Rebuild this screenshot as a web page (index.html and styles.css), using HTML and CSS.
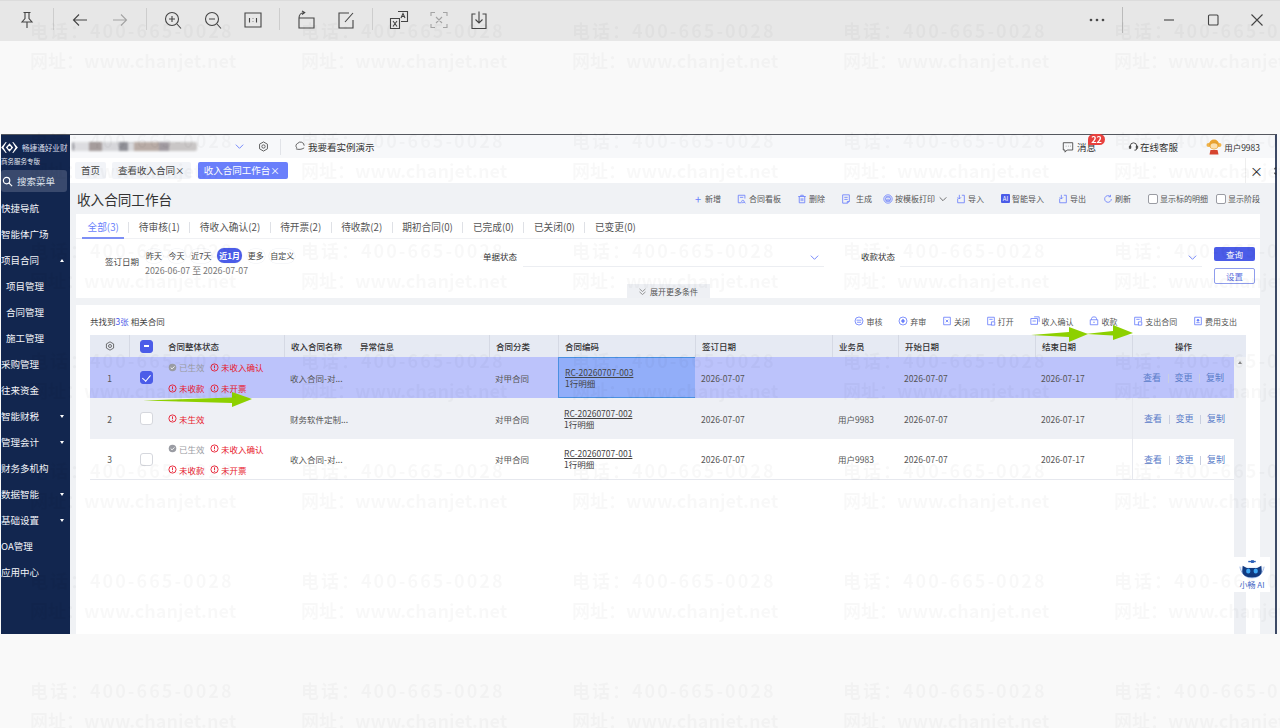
FILE: index.html
```html
<!DOCTYPE html>
<html lang="zh-CN">
<head>
<meta charset="utf-8">
<title>收入合同工作台</title>
<link rel="stylesheet" href="styles.css">
</head>
<body>
<svg class="defs" width="0" height="0">
  <symbol id="i-doc" viewBox="0 0 12 12"><path d="M2.500 1.500h7v9h-7z M4.500 4.500h3 M4.500 6.500h3 M4.500 8.500h2" fill="none" stroke="currentColor"/></symbol>
  <symbol id="i-board" viewBox="0 0 12 12"><path d="M9.500 5.500v-4h-8v9h4M7 7.500a1.500 1.500 0 1 0 .1 0M8.200 9.500l2 1.500M3.500 4h4" fill="none" stroke="currentColor"/></symbol>
  <symbol id="i-trash" viewBox="0 0 12 12"><path d="M1.500 3h9M4.500 3V1.500h3V3M2.700 3v7.500h6.600V3M5 5v3.500M7 5v3.500" fill="none" stroke="currentColor"/></symbol>
  <symbol id="i-gen" viewBox="0 0 12 12"><path d="M2 1h8v8l-2.500 2H2zM4 4h4M4 6.500h4M7.500 11V9H10" fill="none" stroke="currentColor"/></symbol>
  <symbol id="i-print" viewBox="0 0 12 12"><circle cx="6" cy="6" r="5" fill="none" stroke="currentColor"/><path d="M4 4.500V3h4v1.500M3 4.500h6v3H3zM4 7h4v2H4z" fill="none" stroke="currentColor" stroke-width=".8"/></symbol>
  <symbol id="i-io" viewBox="0 0 12 12"><path d="M7 1.500h3v9H2v-5M4 1v5M2 4l2 2 2-2" fill="none" stroke="currentColor"/></symbol>
  <symbol id="i-refresh" viewBox="0 0 12 12"><path d="M10 6a4 4 0 1 1-1.300-3M9 1v2.300H6.700" fill="none" stroke="currentColor"/></symbol>
  <symbol id="i-audit" viewBox="0 0 12 12"><circle cx="6" cy="6" r="4.800" fill="none" stroke="currentColor"/><path d="M3 5h6M3.500 7.500h5" stroke="currentColor"/></symbol>
  <symbol id="i-abandon" viewBox="0 0 12 12"><circle cx="6" cy="6" r="4.800" fill="none" stroke="currentColor"/><path d="M6 3.200L8.500 6 6 8.800 3.500 6z" fill="currentColor"/></symbol>
  <symbol id="i-docx" viewBox="0 0 12 12"><path d="M2 1.500h8v9H2zM4.500 4.500l3 3M7.500 4.500l-3 3" fill="none" stroke="currentColor"/></symbol>
  <symbol id="i-open" viewBox="0 0 12 12"><path d="M2 1.500h8v5M2 1.500v9h5M4 4h4M6.500 7h4v4h-4z" fill="none" stroke="currentColor"/></symbol>
  <symbol id="i-confirm" viewBox="0 0 12 12"><path d="M1 3h8v7H1zM5 1h6v6M3 6h4" fill="none" stroke="currentColor"/></symbol>
  <symbol id="i-box" viewBox="0 0 12 12"><path d="M1.500 4.500h9v6h-9zM3 4.500V3a3 2 0 0 1 6 0v1.500M5 7.500h2" fill="none" stroke="currentColor"/></symbol>
  <symbol id="i-card" viewBox="0 0 12 12"><path d="M2 1.500h8v9H2z" fill="none" stroke="currentColor"/><circle cx="6" cy="5" r="1.500" fill="currentColor"/><path d="M4 8h4" stroke="currentColor"/></symbol>
  <symbol id="i-warn" viewBox="0 0 10 10"><circle cx="5" cy="5" r="4" fill="none" stroke="currentColor"/><path d="M5 2.600v3.200M5 6.800v.9" stroke="currentColor"/></symbol>
  <symbol id="i-ok" viewBox="0 0 10 10"><circle cx="5" cy="5" r="4.200" fill="#9a9ca3"/><path d="M3 5l1.500 1.500L7.200 3.800" fill="none" stroke="#fff"/></symbol>
  <symbol id="i-gear" viewBox="0 0 12 12"><path d="M6 1l4.300 2.500v5L6 11 1.700 8.500v-5z" fill="none" stroke="currentColor"/><circle cx="6" cy="6" r="1.800" fill="none" stroke="currentColor"/></symbol>
  <symbol id="i-chev" viewBox="0 0 12 12"><path d="M2 4l4 4 4-4" fill="none" stroke="currentColor"/></symbol>
  <symbol id="i-chev2" viewBox="0 0 12 12"><path d="M2 2.500l4 3.500 4-3.500M2 6.500l4 3.500 4-3.500" fill="none" stroke="currentColor"/></symbol>
</svg>

<header class="viewer-bar">
  <button class="vb-btn"><svg viewBox="0 0 20 20"><path d="M6.500 2.500h7M8 2.500v6l-3 3.500h10l-3-3.500v-6M10 12v6"/></svg></button>
  <i class="vb-sep"></i>
  <button class="vb-btn"><svg viewBox="0 0 20 20"><path d="M17 10H3.500M9 4.500L3.500 10 9 15.500"/></svg></button>
  <button class="vb-btn vb-dim"><svg viewBox="0 0 20 20"><path d="M3 10h13.500M11 4.500l5.500 5.500-5.500 5.500"/></svg></button>
  <i class="vb-sep"></i>
  <button class="vb-btn"><svg viewBox="0 0 20 20"><circle cx="9" cy="9" r="6.500"/><path d="M14 14l4 4.500M9 6v6M6 9h6"/></svg></button>
  <button class="vb-btn"><svg viewBox="0 0 20 20"><circle cx="9" cy="9" r="6.500"/><path d="M14 14l4 4.500M6 9h6"/></svg></button>
  <button class="vb-btn"><svg viewBox="0 0 20 20"><path d="M2 3h16v14H2zM6.500 8v4.500M13.500 8v4.500M10 8.500v.5M10 11.500v.5"/></svg></button>
  <i class="vb-sep"></i>
  <button class="vb-btn"><svg viewBox="0 0 20 20"><path d="M3 8h15v10H3zM3 8c0-3 2-5.500 5.500-5.500M6 1L8.700 2.500 6 4.500"/></svg></button>
  <button class="vb-btn"><svg viewBox="0 0 20 20"><path d="M17 10v8H3V3h10M9 12l8-9"/></svg></button>
  <i class="vb-sep"></i>
  <button class="vb-btn"><svg viewBox="0 0 20 20"><path d="M9 1.500h9.500v10H12M1.500 8.500H10.500V18.500H1.500zM4 11l4 5.500M8 11l-4 5.500M12 8l2-4.500 2 4.500M12.700 6.500h2.600"/></svg></button>
  <button class="vb-btn vb-dim"><svg viewBox="0 0 20 20"><path d="M2 6V2.500h4M14 2.500h4V6M18 14v3.500h-4M6 17.500H2V14M7 7l6 6M13 7l-6 6"/></svg></button>
  <button class="vb-btn"><svg viewBox="0 0 20 20"><path d="M6.500 4H3v14.500h14V4h-3.500M10 1.500v11M6.500 9.500l3.500 3.500 3.500-3.500"/></svg></button>
  <div class="vb-right">
    <button class="vb-btn"><svg viewBox="0 0 20 20"><circle cx="4" cy="10" r=".8"/><circle cx="10" cy="10" r=".8"/><circle cx="16" cy="10" r=".8"/></svg></button>
    <i class="vb-sep vb-sep-tall"></i>
    <button class="vb-btn vb-win"><svg viewBox="0 0 20 20"><path d="M5 10h10"/></svg></button>
    <button class="vb-btn vb-win"><svg viewBox="0 0 20 20"><rect x="5.500" y="5" width="9.500" height="10" rx="1"/></svg></button>
    <button class="vb-btn vb-win"><svg viewBox="0 0 20 20"><path d="M4.500 4.500l11 11M15.500 4.500l-11 11"/></svg></button>
  </div>
</header>

<section class="app">
  <aside class="sidebar">
    <div class="brand">
      <div class="brand-top">
        <svg class="brand-logo" viewBox="0 0 20 14"><path d="M1 7l5-6h1L3.500 7 7 13H6zM19 7l-5-6h-1l3.500 6L13 13h1z" fill="#fff"/><path d="M10 2.500L14 7l-4 4.500L6 7z" fill="#fff"/><circle cx="10" cy="7" r="1.700" fill="#12264f"/></svg>
        <span class="brand-name">畅捷通好业财</span>
      </div>
      <div class="brand-sub">商务服务专版</div>
    </div>
    <div class="search">
      <svg viewBox="0 0 12 12"><circle cx="5" cy="5" r="3.500"/><path d="M7.500 7.500L11 11"/></svg>
      <span>搜索菜单</span>
    </div>
    <nav class="menu">
      <a class="menu-item">快捷导航</a>
      <a class="menu-item">智能体广场</a>
      <a class="menu-item">项目合同<i class="caret caret-up"></i></a>
      <a class="menu-item menu-sub">项目管理</a>
      <a class="menu-item menu-sub">合同管理</a>
      <a class="menu-item menu-sub">施工管理</a>
      <a class="menu-item">采购管理</a>
      <a class="menu-item">往来资金</a>
      <a class="menu-item">智能财税<i class="caret"></i></a>
      <a class="menu-item">管理会计<i class="caret"></i></a>
      <a class="menu-item">财务多机构</a>
      <a class="menu-item">数据智能<i class="caret"></i></a>
      <a class="menu-item">基础设置<i class="caret"></i></a>
      <a class="menu-item">OA管理</a>
      <a class="menu-item">应用中心</a>
    </nav>
  </aside>

  <main class="main">
    <div class="topbar">
      <div class="company"></div>
      <svg class="tb-chev"><use href="#i-chev"/></svg>
      <svg class="tb-gear"><use href="#i-gear"/></svg>
      <i class="tb-sep"></i>
      <div class="demo">
        <svg viewBox="0 0 12 12"><path d="M2 7.500a3 3 0 0 1 1-5 4 4 0 0 1 7 2.500M1 8.500c3 1 6 1 9-1"/></svg>
        <span>我要看实例演示</span>
      </div>
      <div class="tb-right">
        <div class="msg">
          <svg viewBox="0 0 14 14"><path d="M1.500 2h11v8.500H6L3.500 13v-2.500h-2z"/><path d="M4.500 6h.5M7 6h.5M9.500 6h.5"/></svg>
          <span>消息</span>
          <b class="badge">22</b>
        </div>
        <div class="service">
          <svg viewBox="0 0 12 12"><path d="M2.500 8V5.500a3.500 3.500 0 0 1 7 0V8M9.500 8a2 2 0 0 1-2.500 2M1.500 5.500v2.500h1.500V5.500zM9 5.500v2.500h1.500V5.500z"/></svg>
          <span>在线客服</span>
        </div>
        <div class="user">
          <svg viewBox="0 0 16 16"><circle cx="2.500" cy="6" r="2" fill="#f3b54a"/><circle cx="13.500" cy="6" r="2" fill="#f3b54a"/><circle cx="8" cy="5.500" r="5" fill="#eaa431"/><ellipse cx="8" cy="7" rx="3.500" ry="2.700" fill="#fbe0ae"/><path d="M4.500 11h7l1 4.500h-9z" fill="#d6442f"/></svg>
          <span>用户9983</span>
        </div>
      </div>
    </div>

    <div class="tabs-bar">
      <a class="page-tab">首页</a>
      <a class="page-tab">查看收入合同×</a>
      <a class="page-tab page-tab-on">收入合同工作台×</a>
      <div class="tabs-tools">
        <span class="tabs-close">×</span>
        <svg viewBox="0 0 8 10"><path d="M3 1H1v2M3 9H1V7"/></svg>
      </div>
    </div>

    <div class="content">
      <div class="page-head">
        <h1>收入合同工作台</h1>
        <div class="actions">
          <span class="act act-new"><b>+</b>新增</span>
          <span class="act act-1"><svg><use href="#i-board"/></svg>合同看板</span>
          <span class="act act-2"><svg><use href="#i-trash"/></svg>删除</span>
          <span class="act act-3"><svg><use href="#i-gen"/></svg>生成</span>
          <span class="act act-4"><svg><use href="#i-print"/></svg>按模板打印<svg class="act-chev"><use href="#i-chev"/></svg></span>
          <span class="act act-5"><svg><use href="#i-io"/></svg>导入</span>
          <span class="act act-6"><em class="ai">AI</em>智能导入</span>
          <span class="act act-7"><svg><use href="#i-io"/></svg>导出</span>
          <span class="act act-8"><svg><use href="#i-refresh"/></svg>刷新</span>
          <label class="act act-9"><i class="tiny-box"></i>显示标的明细</label>
          <label class="act"><i class="tiny-box"></i>显示阶段</label>
        </div>
      </div>

      <div class="card filter-card">
        <div class="status-tabs">
          <a class="st st-on">全部(3)</a><i class="st-sep"></i>
          <a class="st">待审核(1)</a><i class="st-sep"></i>
          <a class="st">待收入确认(2)</a><i class="st-sep"></i>
          <a class="st">待开票(2)</a><i class="st-sep"></i>
          <a class="st">待收款(2)</a><i class="st-sep"></i>
          <a class="st">期初合同(0)</a><i class="st-sep"></i>
          <a class="st">已完成(0)</a><i class="st-sep"></i>
          <a class="st">已关闭(0)</a><i class="st-sep"></i>
          <a class="st">已变更(0)</a>
        </div>
        <div class="filters">
          <div class="f-date">
            <span class="f-date-label">签订日期</span>
            <div class="f-date-body">
              <div class="chips">
                <span class="chip">昨天</span>
                <span class="chip">今天</span>
                <span class="chip">近7天</span>
                <span class="chip chip-on">近1月</span>
                <span class="chip">更多</span>
                <span class="chip">自定义</span>
              </div>
              <div class="range">2026-06-07 至 2026-07-07</div>
            </div>
          </div>
          <div class="f-sel f-sel-a">
            <span class="f-sel-label">单据状态</span>
            <div class="select"><svg><use href="#i-chev"/></svg></div>
          </div>
          <div class="f-sel f-sel-b">
            <span class="f-sel-label">收款状态</span>
            <div class="select"><svg><use href="#i-chev"/></svg></div>
          </div>
          <div class="f-btns">
            <button class="btn btn-main">查询</button>
            <button class="btn btn-line">设置</button>
          </div>
        </div>
        <div class="expand"><svg><use href="#i-chev2"/></svg>展开更多条件</div>
      </div>

      <div class="card table-card">
        <div class="table-head">
          <div class="found">共找到<b>3张</b> 相关合同</div>
          <div class="t-actions">
            <span class="ta"><svg><use href="#i-audit"/></svg>审核</span>
            <span class="ta"><svg><use href="#i-abandon"/></svg>弃审</span>
            <span class="ta"><svg><use href="#i-docx"/></svg>关闭</span>
            <span class="ta"><svg><use href="#i-open"/></svg>打开</span>
            <span class="ta"><svg><use href="#i-confirm"/></svg>收入确认</span>
            <span class="ta"><svg><use href="#i-box"/></svg>收款</span>
            <span class="ta"><svg><use href="#i-open"/></svg>支出合同</span>
            <span class="ta"><svg><use href="#i-card"/></svg>费用支出</span>
          </div>
        </div>
        <div class="table-wrap">
          <div class="grid-table">
            <div class="row row-head">
              <div class="c c-center"><svg class="h-gear"><use href="#i-gear"/></svg></div>
              <div class="c c-center c-check c-line"><i class="cb cb-mixed"></i></div>
              <div class="c c-status"><span class="h-txt">合同整体状态</span></div>
              <div class="c c-line c-pad c-two"><span>收入合同名称</span><span>异常信息</span></div>
              <div class="c c-line c-pad">合同分类</div>
              <div class="c c-line c-pad">合同编码</div>
              <div class="c c-line c-pad">签订日期</div>
              <div class="c c-line c-pad">业务员</div>
              <div class="c c-line c-pad">开始日期</div>
              <div class="c c-line c-pad">结束日期</div>
              <div class="c c-line c-center">操作</div>
            </div>

            <div class="row row-sel">
              <div class="c c-center">1</div>
              <div class="c c-center c-check"><i class="cb cb-on"></i></div>
              <div class="c c-status">
                <div class="tags"><span class="tag tag-ok"><svg><use href="#i-ok"/></svg>已生效</span><span class="tag"><svg><use href="#i-warn"/></svg>未收入确认</span><span class="tag"><svg><use href="#i-warn"/></svg>未收款</span><span class="tag"><svg><use href="#i-warn"/></svg>未开票</span></div>
              </div>
              <div class="c c-pad">收入合同-对...</div>
              <div class="c c-pad">对甲合同</div>
              <div class="c c-pad c-code c-focus"><u>RC-20260707-003</u><span>1行明细</span></div>
              <div class="c c-pad">2026-07-07</div>
              <div class="c c-pad"></div>
              <div class="c c-pad">2026-07-07</div>
              <div class="c c-pad">2026-07-17</div>
              <div class="c c-ops"><a>查看</a><a>变更</a><a>复制</a></div>
            </div>

            <div class="row row-alt">
              <div class="c c-center">2</div>
              <div class="c c-center c-check"><i class="cb"></i></div>
              <div class="c c-status">
                <div class="tags"><span class="tag"><svg><use href="#i-warn"/></svg>未生效</span></div>
              </div>
              <div class="c c-pad">财务软件定制...</div>
              <div class="c c-pad">对甲合同</div>
              <div class="c c-pad c-code"><u>RC-20260707-002</u><span>1行明细</span></div>
              <div class="c c-pad">2026-07-07</div>
              <div class="c c-pad">用户9983</div>
              <div class="c c-pad">2026-07-07</div>
              <div class="c c-pad">2026-07-17</div>
              <div class="c c-ops"><a>查看</a><a>变更</a><a>复制</a></div>
            </div>

            <div class="row row-last">
              <div class="c c-center">3</div>
              <div class="c c-center c-check"><i class="cb"></i></div>
              <div class="c c-status">
                <div class="tags"><span class="tag tag-ok"><svg><use href="#i-ok"/></svg>已生效</span><span class="tag"><svg><use href="#i-warn"/></svg>未收入确认</span><span class="tag"><svg><use href="#i-warn"/></svg>未收款</span><span class="tag"><svg><use href="#i-warn"/></svg>未开票</span></div>
              </div>
              <div class="c c-pad">收入合同-对...</div>
              <div class="c c-pad">对甲合同</div>
              <div class="c c-pad c-code"><u>RC-20260707-001</u><span>1行明细</span></div>
              <div class="c c-pad">2026-07-07</div>
              <div class="c c-pad">用户9983</div>
              <div class="c c-pad">2026-07-07</div>
              <div class="c c-pad">2026-07-17</div>
              <div class="c c-ops"><a>查看</a><a>变更</a><a>复制</a></div>
            </div>
          </div>
          <div class="v-scroll"><i></i></div>
        </div>
      </div>
    </div>
  </main>

  <div class="ai-widget">
    <svg viewBox="0 0 30 22">
      <path d="M11 2.500h8" stroke="#2c5fb8" stroke-width="1.500" fill="none"/>
      <path d="M14 1h3v3h-3z" fill="#2c5fb8"/>
      <path d="M2 8c1 5 4 12 13 12s12-7 13-12" fill="#eaf0fb" stroke="#9db8e8"/>
      <path d="M5 7l4.500 2.500h11L25 7l.5 6c0 4-4 6.500-10.500 6.500S4.500 17 4.500 13z" fill="#123a80"/>
      <ellipse cx="11" cy="12.500" rx="2.300" ry="2.700" fill="#3fa8f5"/>
      <ellipse cx="19" cy="12.500" rx="2.300" ry="2.700" fill="#3fa8f5"/>
    </svg>
    <span>小畅 AI</span>
  </div>
</section>

<svg class="arrows" viewBox="0 0 1280 728">
  <path d="M143 400.500L232 397.500V392L252 399 232 407V403z"/>
  <path d="M1031 335L1069 332V327L1088 334 1069 342V337z"/>
  <path d="M1085 334L1113 331V325L1133 333 1113 340V335.500z"/>
</svg>

<div class="watermark">
  <div class="wm"><p class="wm-tel">电话：400-665-0028</p><p>网址：www.chanjet.net</p></div>
  <div class="wm"><p class="wm-tel">电话：400-665-0028</p><p>网址：www.chanjet.net</p></div>
  <div class="wm"><p class="wm-tel">电话：400-665-0028</p><p>网址：www.chanjet.net</p></div>
  <div class="wm"><p class="wm-tel">电话：400-665-0028</p><p>网址：www.chanjet.net</p></div>
  <div class="wm"><p class="wm-tel">电话：400-665-0028</p><p>网址：www.chanjet.net</p></div>
  <div class="wm"><p class="wm-tel">电话：400-665-0028</p><p>网址：www.chanjet.net</p></div>
  <div class="wm"><p class="wm-tel">电话：400-665-0028</p><p>网址：www.chanjet.net</p></div>
  <div class="wm"><p class="wm-tel">电话：400-665-0028</p><p>网址：www.chanjet.net</p></div>
  <div class="wm"><p class="wm-tel">电话：400-665-0028</p><p>网址：www.chanjet.net</p></div>
  <div class="wm"><p class="wm-tel">电话：400-665-0028</p><p>网址：www.chanjet.net</p></div>
  <div class="wm"><p class="wm-tel">电话：400-665-0028</p><p>网址：www.chanjet.net</p></div>
  <div class="wm"><p class="wm-tel">电话：400-665-0028</p><p>网址：www.chanjet.net</p></div>
  <div class="wm"><p class="wm-tel">电话：400-665-0028</p><p>网址：www.chanjet.net</p></div>
  <div class="wm"><p class="wm-tel">电话：400-665-0028</p><p>网址：www.chanjet.net</p></div>
  <div class="wm"><p class="wm-tel">电话：400-665-0028</p><p>网址：www.chanjet.net</p></div>
  <div class="wm"><p class="wm-tel">电话：400-665-0028</p><p>网址：www.chanjet.net</p></div>
  <div class="wm"><p class="wm-tel">电话：400-665-0028</p><p>网址：www.chanjet.net</p></div>
  <div class="wm"><p class="wm-tel">电话：400-665-0028</p><p>网址：www.chanjet.net</p></div>
  <div class="wm"><p class="wm-tel">电话：400-665-0028</p><p>网址：www.chanjet.net</p></div>
  <div class="wm"><p class="wm-tel">电话：400-665-0028</p><p>网址：www.chanjet.net</p></div>
  <div class="wm"><p class="wm-tel">电话：400-665-0028</p><p>网址：www.chanjet.net</p></div>
  <div class="wm"><p class="wm-tel">电话：400-665-0028</p><p>网址：www.chanjet.net</p></div>
  <div class="wm"><p class="wm-tel">电话：400-665-0028</p><p>网址：www.chanjet.net</p></div>
  <div class="wm"><p class="wm-tel">电话：400-665-0028</p><p>网址：www.chanjet.net</p></div>
  <div class="wm"><p class="wm-tel">电话：400-665-0028</p><p>网址：www.chanjet.net</p></div>
  <div class="wm"><p class="wm-tel">电话：400-665-0028</p><p>网址：www.chanjet.net</p></div>
  <div class="wm"><p class="wm-tel">电话：400-665-0028</p><p>网址：www.chanjet.net</p></div>
  <div class="wm"><p class="wm-tel">电话：400-665-0028</p><p>网址：www.chanjet.net</p></div>
  <div class="wm"><p class="wm-tel">电话：400-665-0028</p><p>网址：www.chanjet.net</p></div>
  <div class="wm"><p class="wm-tel">电话：400-665-0028</p><p>网址：www.chanjet.net</p></div>
  <div class="wm"><p class="wm-tel">电话：400-665-0028</p><p>网址：www.chanjet.net</p></div>
  <div class="wm"><p class="wm-tel">电话：400-665-0028</p><p>网址：www.chanjet.net</p></div>
  <div class="wm"><p class="wm-tel">电话：400-665-0028</p><p>网址：www.chanjet.net</p></div>
  <div class="wm"><p class="wm-tel">电话：400-665-0028</p><p>网址：www.chanjet.net</p></div>
  <div class="wm"><p class="wm-tel">电话：400-665-0028</p><p>网址：www.chanjet.net</p></div>
</div>
</body>
</html>
```

FILE: styles.css
```css
* { box-sizing: border-box; }
html, body { margin: 0; height: 728px; overflow: hidden; }
body {
  position: relative;
  background: #f9f9f9;
  font-family: "Noto Sans CJK SC", "Noto Sans", "Liberation Sans", sans-serif;
  font-size: 8.500px;
  color: #444;
}
.defs { display: block; height: 0; }

/* viewer toolbar */
.viewer-bar {
  height: 41px;
  display: flex;
  align-items: center;
  padding-left: 7px;
  padding-right: 1px;
  background: #e7e7e7;
  border-top: 1px solid #dcdcdc;
  margin-bottom: 93px;
}
.vb-btn {
  width: 40px;
  height: 40px;
  padding: 0;
  margin-top: -2px;
  border: 0;
  background: none;
  display: flex;
  align-items: center;
  justify-content: center;
  color: #444;
}
.vb-btn svg { width: 20px; height: 20px; fill: none; stroke: currentColor; stroke-width: 1.100; }
.vb-dim { color: #a4a4a4; }
.vb-sep { width: 1px; height: 22px; background: #cdcdcd; margin: -4px 6px 0; }
.vb-right { margin-left: auto; display: flex; align-items: center; }
.vb-win { width: 44px; }
.vb-sep-tall { margin: -2px 24px 0 5px; height: 26px; background: #bbb; }

/* app window */
.app {
  position: relative;
  height: 500px;
  display: flex;
  margin-left: 1px;
  margin-right: 3px;
  background: #fff;
  border-top: 1px solid #55585f;
  border-right: 2px solid #3d4a66;
  filter: blur(.35px);
}
.sidebar {
  width: 69px;
  flex: none;
  background: #12264f;
  color: #fff;
}
.brand { height: 35px; padding-top: 5px; }
.brand-top { display: flex; align-items: center; gap: 3px; height: 14px; margin-left: -1px; }
.brand-logo { width: 19px; height: 13px; }
.brand-name { font-size: 7.600px; color: #d8deea; white-space: nowrap; }
.brand-sub { font-size: 6.500px; line-height: 10px; margin-top: 2px; color: #e6e9f2; white-space: nowrap; }
.search {
  height: 22px;
  width: 66px;
  display: flex;
  align-items: center;
  gap: 4px;
  padding-left: 1px;
  background: #39496d;
  border-radius: 3px;
  font-size: 9.500px;
  color: #dfe3ec;
}
.search svg { width: 11px; height: 11px; fill: none; stroke: #fff; stroke-width: 1.300; }
.menu { margin-top: 3px; }
.menu-item {
  height: 26px;
  display: flex;
  align-items: center;
  justify-content: space-between;
  padding-right: 6px;
  font-size: 9.500px;
  color: #f2f4f8;
}
.menu-sub { padding-left: 5px; }
.caret { width: 0; height: 0; border: 2.500px solid transparent; border-top: 3px solid #fff; border-bottom: 0; }
.caret-up { border-top: 0; border-bottom: 3px solid #fff; }

.main { flex: 1; min-width: 0; display: flex; flex-direction: column; }

.topbar {
  height: 23px;
  flex: none;
  display: flex;
  align-items: center;
  background: #f7f8fa;
  padding-left: 2px;
  font-size: 9.500px;
  color: #333;
}
.company {
  width: 125px;
  height: 9px;
  border-radius: 2px;
  filter: blur(1.300px);
  background: linear-gradient(90deg, #9a9aa2 0 2%, #dcdce0 2% 14%, #a59c9c 14% 24%, #d6d6da 24% 38%, #8f8f96 38% 45%, #d9d9dc 45% 50%, #b9aca6 50% 70%, #a09aa0 70% 78%, #c9c6c6 78% 100%);
}
.tb-chev { width: 11px; height: 11px; color: #6a7ffb; margin-left: 37px; }
.tb-gear { width: 11px; height: 11px; color: #555; margin-left: 13px; }
.tb-sep { width: 1px; height: 16px; background: #e1e3e8; margin-left: 11px; }
.demo { display: flex; align-items: center; gap: 2px; margin-left: 14px; }
.demo svg { width: 11px; height: 11px; fill: none; stroke: #555; }
.tb-right { margin-left: auto; display: flex; align-items: center; padding-right: 15px; }
.msg { position: relative; display: flex; align-items: center; gap: 3px; }
.msg svg { width: 12px; height: 12px; fill: none; stroke: #444; }
.badge {
  position: absolute;
  left: 26px;
  top: -6px;
  width: 17px;
  height: 11px;
  border-radius: 6px 6px 6px 1px;
  background: #e8413e;
  color: #fff;
  font-size: 9px;
  line-height: 11px;
  text-align: center;
}
.service { display: flex; align-items: center; gap: 1px; margin-left: 32px; }
.service svg { width: 11px; height: 11px; fill: none; stroke: #444; }
.user { display: flex; align-items: center; gap: 2px; margin-left: 28px; font-size: 8.500px; }
.user svg { width: 16px; height: 16px; }

.tabs-bar {
  height: 25px;
  flex: none;
  display: flex;
  align-items: center;
  gap: 6px;
  padding-left: 5px;
  background: #fff;
  font-size: 9.500px;
}
.page-tab {
  height: 17px;
  line-height: 17px;
  padding: 0 6px;
  background: #f2f4f8;
  color: #444;
  border-radius: 2px;
  white-space: nowrap;
}
.page-tab-on { background: #6a7ffb; color: #fff; margin-left: 1.300px; padding-right: 8px; }
.tabs-tools { margin-left: auto; height: 25px; width: 30px; flex: none; display: flex; align-items: center; gap: 11px; border-left: 1px solid #eee; padding-left: 4px; }
.tabs-close { font-size: 13px; line-height: 13px; color: #222; }
.tabs-tools svg { width: 6px; height: 8px; fill: none; stroke: #222; flex: none; }

.content {
  flex: 1;
  min-height: 0;
  display: flex;
  flex-direction: column;
  padding: 0 15px 0 6px;
  background: #f0f2f5;
}
.page-head { height: 31px; flex: none; display: flex; align-items: center; justify-content: space-between; }
.page-head h1 { margin: 0 0 0 1px; font-size: 13.600px; font-weight: 400; color: #333; }
.actions { display: flex; align-items: center; font-size: 8px; color: #555; }
.act { display: flex; align-items: center; gap: 2px; margin-right: 17px; white-space: nowrap; }
.act svg { width: 10px; height: 10px; color: #6a7ffb; }
.act b { color: #6a7ffb; font-weight: 400; font-size: 11px; line-height: 10px; margin-right: 2px; }
.act:last-child { margin-right: 0; }
.act-new, .act-1, .act-2 { margin-right: 16px; }
.act-3 { margin-right: 11px; gap: 5px; }
.act-4 { margin-right: 8px; }
.act svg.act-chev { color: #555; margin-left: 1px; }
.act-6 { margin-right: 14px; }
.act-9 { margin-right: 8px; }
.ai { width: 9px; height: 9px; background: #4b5ce8; color: #fff; font-style: normal; font-size: 6px; line-height: 9px; text-align: center; border-radius: 1px; }
.tiny-box { width: 10px; height: 10px; background: #fff; border: 1px solid #9a9ca3; border-radius: 2px; }

.card { background: #fff; }
.filter-card { height: 84px; flex: none; display: flex; flex-direction: column; margin-bottom: 7px; }
.status-tabs {
  height: 25px;
  flex: none;
  display: flex;
  align-items: center;
  gap: 4px;
  padding-left: 6px;
  border-bottom: 1px solid #f0f1f4;
  font-size: 9.700px;
  color: #555;
}
.st { height: 25px; line-height: 21px; padding: 3px 5.500px 0; white-space: nowrap; }
.st-on { color: #6a7ffb; border-bottom: 2px solid #7d8ff5; }
.st-sep { width: 1px; height: 11px; margin-top: 2px; background: #dfe1e6; }

.filters { height: 45px; flex: none; display: flex; padding-left: 29px; padding-top: 9px; }
.f-date { width: 378px; display: flex; }
.f-date-label { width: 40px; margin-top: 7px; flex: none; white-space: nowrap; }
.f-date-body { display: flex; flex-direction: column; }
.chips { display: flex; gap: 4.500px; height: 15px; align-items: center; font-size: 8px; }
.chip { height: 14px; padding: 0 1px; line-height: 14px; border-radius: 7px; box-shadow: 0 0 0 .5px #eef0f4; white-space: nowrap; }
.chip-on { background: #4b5ce8; color: #fff; font-weight: 700; height: 15px; line-height: 15px; padding: 0 2.300px; }
.range { line-height: 15px; font-size: 8.800px; color: #777; white-space: nowrap; }
.f-sel { width: 378px; display: flex; gap: 6px; padding-top: 1px; }
.f-sel-b { width: 353px; gap: 5px; }
.f-sel-label { line-height: 15px; white-space: nowrap; color: #333; }
.select { width: 301px; height: 19px; display: flex; justify-content: flex-end; align-items: center; border-bottom: 1px solid #eceef2; padding-right: 4px; margin-top: -1px; }
.f-sel-b .select { width: 302px; }
.select svg { width: 11px; height: 11px; color: #6a7ffb; }
.f-btns { width: 41px; display: flex; flex-direction: column; gap: 7px; margin-top: -1px; }
.btn { height: 16px; padding: 0; border-radius: 2px; font: inherit; font-size: 8.500px; line-height: 14px; }
.btn-main { background: #4b5ce8; color: #fff; border: 0; }
.btn-line { background: #fff; color: #5a6fe0; border: 1px solid #8f9ded; }
.expand {
  width: 83px;
  height: 14px;
  flex: none;
  align-self: center;
  display: flex;
  justify-content: center;
  align-items: center;
  gap: 3px;
  background: #eef0f4;
  font-size: 8px;
  color: #555;
  white-space: nowrap;
}
.expand svg { width: 9px; height: 9px; color: #777; }

.table-card { flex: 1; min-height: 0; display: flex; flex-direction: column; padding: 0 14px; }
.table-head { height: 30px; flex: none; display: flex; align-items: center; justify-content: space-between; padding-top: 2px; }
.found b { color: #4b5ce8; font-weight: 400; }
.t-actions { display: flex; gap: 15.800px; padding-right: 9px; font-size: 8px; color: #555; }
.ta { display: flex; align-items: center; gap: 2px; white-space: nowrap; }
.ta svg { width: 10px; height: 10px; color: #6a7ffb; }
.table-wrap { flex: 1; min-height: 0; display: flex; }
.grid-table { width: 1144px; flex: none; }
.row {
  display: grid;
  grid-template-columns: 39px 31px 124px 205px 69px 137px 137px 66px 137px 97px 102px;
  height: 41px;
  border-bottom: 1px solid #e6e8ee;
  color: #555;
}
.row-head { height: 22px; background: #e6eaf3; color: #333; border-bottom: 0; font-weight: 500; }
.row-sel { background: #bcc3fb; border-bottom: 0; }
.row-alt { background: #eef0f5; border-bottom: 0; }
.c { display: flex; align-items: center; min-width: 0; white-space: nowrap; }
.c-center { justify-content: center; }
.c-check { padding-left: 3px; }
.c-line { border-left: 1px solid #d5d9e4; }
.c-pad { padding-left: 6px; }
.c-status { padding-left: 8px; border-left: 0; }
.c-two { gap: 18px; }
.h-gear { width: 10px; height: 10px; color: #555; }
.cb { width: 13px; height: 13px; border-radius: 3px; border: 1px solid #d5d7dd; background: #fff; position: relative; }
.cb-on, .cb-mixed { background: #4b5ce8; border-color: #4b5ce8; }
.cb-on::after { content: ""; position: absolute; left: 3.500px; top: 1px; width: 3.500px; height: 7px; border: solid #fff; border-width: 0 1.500px 1.500px 0; transform: rotate(40deg); }
.cb-mixed::after { content: ""; position: absolute; left: 3px; top: 4.500px; width: 5px; height: 1.500px; background: #fff; }
.tags { display: grid; grid-template-columns: 42px auto; row-gap: 6px; align-items: center; }
.tag { display: flex; align-items: center; gap: 2px; height: 15px; color: #e8192c; }
.tag svg { width: 9px; height: 9px; flex: none; }
.tag-ok { color: #9a9ca3; }
.c-code { flex-direction: column; align-items: flex-start; justify-content: center; line-height: 11px; color: #444; }
.c-focus { background: #92aef9; border: solid #4a90e2; border-width: 1px 0 1px 1px; }
.c-ops { justify-content: flex-start; gap: 13.500px; padding-left: 11px; font-size: 9px; }
.row-alt .c-ops, .row-last .c-ops { border-left: 1px solid #e6e8ee; }
.c-ops a { color: #5a7cc9; position: relative; }
.c-ops a + a::before { content: ""; position: absolute; left: -7px; top: 3px; width: 1px; height: 9px; background: #c9cfe0; }
.v-scroll { width: 12px; flex: 1; background: #eef0f4; position: relative; }
.v-scroll::before { content: ""; display: block; height: 22px; background: #e6eaf3; }
.v-scroll i { position: absolute; left: 4px; top: 26px; border: 2px solid transparent; border-top: 0; border-bottom: 3px solid #888; }

.ai-widget {
  position: absolute;
  left: 1233px;
  top: 422px;
  width: 36px;
  height: 35px;
  display: flex;
  flex-direction: column;
  align-items: center;
  background: #fff;
  padding-top: 2px;
  color: #4468c8;
  font-size: 8px;
  line-height: 10px;
  white-space: nowrap;
}
.ai-widget svg { width: 28px; height: 21px; flex: none; }

.arrows { position: absolute; left: 0; top: 0; width: 1280px; height: 728px; pointer-events: none; }
.arrows path { fill: #8dd000; }

.watermark {
  position: absolute;
  left: 0;
  top: 0;
  width: 1280px;
  height: 728px;
  overflow: hidden;
  padding: 15px 0 0 30px;
  display: grid;
  grid-template-columns: repeat(5, 271px);
  grid-auto-rows: 110px;
  pointer-events: none;
  color: rgba(0, 0, 0, .028);
  font-size: 18px;
  font-weight: 700;
}
.wm { white-space: nowrap; }
.wm p { margin: 0; height: 30px; line-height: 30px; }
.wm-tel { letter-spacing: 2px; }
```
